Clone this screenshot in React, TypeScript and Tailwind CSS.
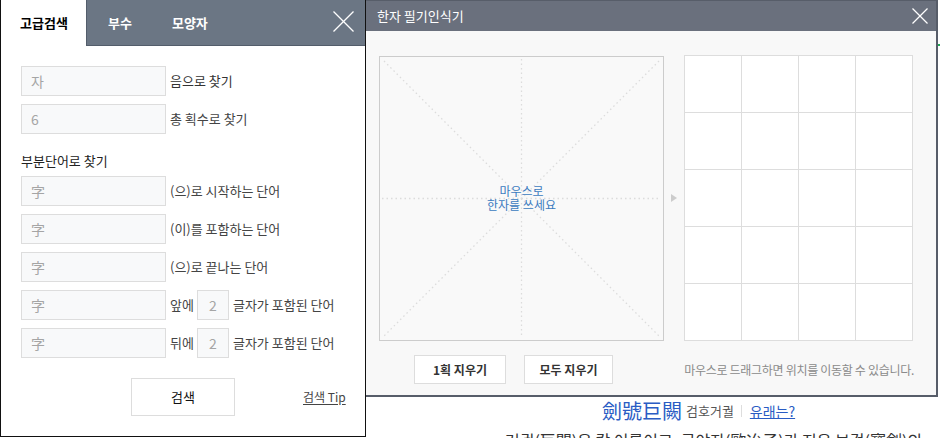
const font = { fontFamily: '"Noto Sans CJK KR", "Noto Sans", sans-serif' };

function Field({ value, w = "w-[145px]", center = false }: { value: string; w?: string; center?: boolean }) {
  return (
    <div
      className={`${w} h-[30px] shrink-0 border border-[#dddddd] bg-[#f8f9fa] flex items-center text-[14px] text-[#a5a5a5] ${
        center ? "justify-center" : "pl-[9px]"
      }`}
    >
      {value}
    </div>
  );
}

function Row({ children }: { children: React.ReactNode }) {
  return <div className="flex items-center h-[30px] text-[13px] text-[#444] whitespace-nowrap">{children}</div>;
}

function CloseIcon({ size, className }: { size: number; className?: string }) {
  return (
    <svg width={size} height={size} viewBox={`0 0 ${size} ${size}`} className={className}>
      <line x1="0.5" y1="0.5" x2={size - 0.5} y2={size - 0.5} stroke="#fff" strokeWidth="1.2" />
      <line x1={size - 0.5} y1="0.5" x2="0.5" y2={size - 0.5} stroke="#fff" strokeWidth="1.2" />
    </svg>
  );
}

function SearchPanel() {
  return (
    <div className="absolute left-0 top-0 z-10 w-[366px] h-[437px] bg-white border border-[#111] border-t-0 flex flex-col">
      <div className="flex h-[46px] shrink-0">
        <div className="w-[85px] flex items-center pl-[19px] text-[13px] font-bold text-black">고급검색</div>
        <div className="flex-1 flex items-center bg-[#6b7684] border-l border-b border-[#535d6b] text-[13px] font-bold text-white">
          <span className="ml-[21px]">부수</span>
          <span className="ml-[40px]">모양자</span>
          <CloseIcon size={21} className="ml-auto mr-[11px] mb-[3px]" />
        </div>
      </div>

      <div className="pl-[20px] pt-[20px] flex flex-col gap-[8px]">
        <Row>
          <Field value="자" />
          <span className="ml-[4px] text-[#333]">음으로 찾기</span>
        </Row>
        <Row>
          <Field value="6" />
          <span className="ml-[4px]">총 획수로 찾기</span>
        </Row>
      </div>

      <div className="pl-[20px] mt-[19px] text-[13px] leading-[16px] text-[#222]">부분단어로 찾기</div>

      <div className="pl-[20px] pt-[7px] flex flex-col gap-[8px]">
        <Row>
          <Field value="字" />
          <span className="ml-[4px]">(으)로 시작하는 단어</span>
        </Row>
        <Row>
          <Field value="字" />
          <span className="ml-[4px]">(이)를 포함하는 단어</span>
        </Row>
        <Row>
          <Field value="字" />
          <span className="ml-[4px]">(으)로 끝나는 단어</span>
        </Row>
        <Row>
          <Field value="字" />
          <span className="ml-[4px]">앞에</span>
          <div className="ml-[3px]">
            <Field value="2" w="w-[32px]" center />
          </div>
          <span className="ml-[4px]">글자가 포함된 단어</span>
        </Row>
        <Row>
          <Field value="字" />
          <span className="ml-[4px]">뒤에</span>
          <div className="ml-[3px]">
            <Field value="2" w="w-[32px]" center />
          </div>
          <span className="ml-[4px]">글자가 포함된 단어</span>
        </Row>
      </div>

      <div className="mt-[20px] flex items-center">
        <button className="ml-[130px] w-[104px] h-[38px] border border-[#dddddd] bg-white text-[13px] text-[#111]">
          검색
        </button>
        <a className="ml-[68px] text-[12px] text-[#444] underline underline-offset-2">검색 Tip</a>
      </div>
    </div>
  );
}

function Canvas() {
  const s = 283;
  const dot = { stroke: "#dcdcdc", strokeWidth: 1.3, strokeDasharray: "1.5 3" };
  return (
    <div className="relative w-[285px] h-[285px] border border-[#cccccc] bg-[#f9f9f9] shrink-0">
      <svg width={s} height={s} className="absolute left-0 top-0">
        <line x1="4" y1="4" x2={s - 4} y2={s - 4} {...dot} />
        <line x1={s - 4} y1="4" x2="4" y2={s - 4} {...dot} />
        <line x1={s / 2} y1="2" x2={s / 2} y2={s - 2} {...dot} />
        <line x1="2" y1={s / 2} x2={s - 2} y2={s / 2} {...dot} />
      </svg>
      <div className="absolute inset-0 flex flex-col items-center justify-center text-[12px] leading-[14px] text-[#3b7bc0]">
        <span>마우스로</span>
        <span>한자를 쓰세요</span>
      </div>
    </div>
  );
}

function RecognizerPanel() {
  return (
    <div className="absolute left-[364px] top-0 w-[574px] h-[397px] bg-[#f8f8f8] border-2 border-t border-[#575d69] flex flex-col">
      <div className="h-[30px] shrink-0 bg-[#6a707d] flex items-center pl-[11px] pr-[8px] text-[13px] text-white">
        <span>한자 필기인식기</span>
        <CloseIcon size={16} className="ml-auto" />
      </div>

      <div className="flex items-center pl-[13px] pt-[24px]">
        <Canvas />
        <div className="ml-[7px] w-0 h-0 border-y-[4px] border-y-transparent border-l-[6px] border-l-[#cccccc]" />
        <div className="ml-[7px] grid grid-cols-4 border-l border-t border-[#dddddd]">
          {Array.from({ length: 20 }).map((_, i) => (
            <div key={i} className="w-[57px] h-[57px] bg-white border-r border-b border-[#dddddd]" />
          ))}
        </div>
      </div>

      <div className="flex items-center mt-[14px] pl-[48px] pr-[22px]">
        <button className="w-[92px] h-[29px] bg-white border border-[#dddddd] text-[12px] font-bold text-[#333]">
          1획 지우기
        </button>
        <button className="ml-[18px] w-[89px] h-[29px] bg-white border border-[#dddddd] text-[12px] font-bold text-[#333]">
          모두 지우기
        </button>
        <span className="ml-auto text-[12px] text-[#8a8a8a] tracking-[-0.3px]">마우스로 드래그하면 위치를 이동할 수 있습니다.</span>
      </div>
    </div>
  );
}

export default function App() {
  return (
    <div className="relative w-[940px] h-[438px] overflow-hidden bg-white" style={font}>
      <div className="absolute left-[591px] top-0 w-[2px] h-[3px] bg-[#22aa55]" />
      <div className="absolute left-[938px] top-[44px] w-[2px] h-[2px] bg-[#22aa55]" />

      <div className="pt-[398px] flex flex-col">
        <div className="flex items-center h-[26px] pl-[602px]">
          <span className="text-[20px] leading-[24px] text-[#2a5cc4]">劍號巨闕</span>
          <span className="ml-[4px] text-[13px] text-[#555]">검호거궐</span>
          <span className="ml-[7px] w-px h-[12px] bg-[#dddddd]" />
          <a className="ml-[8px] text-[14px] text-[#2a5cc4] underline">유래는?</a>
        </div>
        <div className="pl-[505px] mt-[6px] text-[16px] leading-[20px] text-[#333] whitespace-nowrap">
          거궐(巨闕)은 칼 이름이고, 구야자(歐冶子)가 지은 보검(寶劍)의
        </div>
      </div>

      <RecognizerPanel />
      <SearchPanel />
    </div>
  );
}
